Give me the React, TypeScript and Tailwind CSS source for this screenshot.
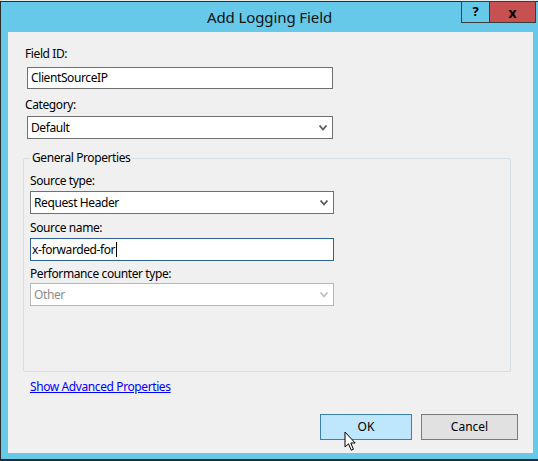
import React from 'react';

const font = { fontFamily: '"Noto Sans", "Open Sans", sans-serif' };

function Chevron({ disabled }: { disabled?: boolean }) {
  return (
    <svg width="8" height="6" viewBox="0 0 8 6" className="shrink-0">
      <path
        d="M0.5 0.5 L4 4.5 L7.5 0.5"
        fill="none"
        stroke={disabled ? '#c0c0c0' : '#5a5a5a'}
        strokeWidth="1.8"
      />
    </svg>
  );
}

function Select({ value, disabled, wide }: { value: string; disabled?: boolean; wide?: boolean }) {
  return (
    <div
      className={`flex h-[23px] items-center justify-between border bg-white pl-[3px] pr-[5px] text-[12px] tracking-[-0.4px] ${
        wide ? 'w-[306px]' : 'w-[304px]'
      } ${disabled ? 'border-[#b4b8bb] text-[#8c8c8c]' : 'border-[#707070] text-black'}`}
    >
      <span>{value}</span>
      <Chevron disabled={disabled} />
    </div>
  );
}

function Label({ children, className = '' }: { children: React.ReactNode; className?: string }) {
  return (
    <div className={`h-4 text-[12px] leading-4 tracking-[-0.4px] text-black ${className}`}>
      {children}
    </div>
  );
}

function Cursor() {
  return (
    <svg
      width="13"
      height="21"
      viewBox="0 0 13 21"
      className="pointer-events-none absolute left-[344px] top-[431px]"
    >
      <path
        d="M1 1 L1 16 L4.5 12.8 L7.2 19.2 L9.4 18.3 L6.8 12 L11.2 12 Z"
        fill="white"
        stroke="black"
        strokeWidth="1"
      />
    </svg>
  );
}

export default function App() {
  return (
    <div className="relative h-[461px] w-[538px] overflow-hidden bg-[#e9e9e9]" style={font}>
      <div className="mt-px flex h-[460px] flex-col border-t border-l border-b-2 border-[#2b2b2b] bg-[#66c9ea]">
        {/* title bar */}
        <div className="relative flex h-[30px] shrink-0 items-center justify-center">
          <span className="text-[15px] tracking-[-0.1px] text-[#111]">Add Logging Field</span>
          <div className="absolute top-[-1px] right-[2px] flex h-[22px]">
            <div className="flex w-[28px] items-center justify-center border border-r-0 border-[#3a3a3a] text-[13px] font-bold text-black">
              ?
            </div>
            <div className="flex w-[47px] items-center justify-center border border-[#3a3a3a] bg-[#c75050] text-[14px] font-bold text-black">
              x
            </div>
          </div>
        </div>

        {/* client area */}
        <div className="ml-[7px] mr-[5px] flex h-[421px] flex-col bg-[#f0f0f0] pl-[17px]">
          <Label className="mt-[14px]">Field ID:</Label>
          <div className="mt-[5px] ml-[2px] flex h-[22px] w-[306px] items-center border border-[#707070] bg-white pl-[3px] text-[12px] tracking-[-0.4px]">
            ClientSourceIP
          </div>

          <Label className="mt-[8px]">Category:</Label>
          <div className="mt-[3px] ml-[2px]">
            <Select value="Default" wide />
          </div>

          {/* group box */}
          <div className="relative mt-[19px] -ml-[2px] h-[214px] w-[488px] rounded-[2px] border border-[#d5dfe5] pl-[6px]">
            <span className="absolute -top-[9px] left-[6px] bg-[#f0f0f0] px-[2px] text-[12px] leading-4 tracking-[-0.4px] text-black">
              General Properties
            </span>
            <Label className="mt-[14px]">Source type:</Label>
            <div className="mt-[2px]">
              <Select value="Request Header" />
            </div>
            <Label className="mt-[6px]">Source name:</Label>
            <div className="mt-[2px] flex h-[23px] w-[304px] items-center border border-[#2f6496] bg-white pl-[1px] text-[12px] tracking-[-0.4px]">
              <span>x-forwarded-for</span>
              <span className="ml-px h-[15px] w-px bg-black" />
            </div>
            <Label className="mt-[5px]">Performance counter type:</Label>
            <div className="mt-[1px]">
              <Select value="Other" disabled />
            </div>
          </div>

          <div className="mt-[7px] ml-[5px] h-4 text-[12px] leading-4 tracking-[-0.4px]">
            <a href="#" className="text-[#0000ff] underline">
              Show Advanced Properties
            </a>
          </div>

          <div className="mt-[19px] flex justify-end gap-[9px] pr-[15px]">
            <button
              type="button"
              className="h-[26px] w-[92px] border border-[#3c7fb1] bg-[#bee6fd] text-[12px] text-black"
            >
              OK
            </button>
            <button
              type="button"
              className="h-[26px] w-[97px] border border-[#7a7a7a] bg-[#e1e1e1] text-[12px] text-black"
            >
              Cancel
            </button>
          </div>
        </div>
      </div>
      <Cursor />
    </div>
  );
}
